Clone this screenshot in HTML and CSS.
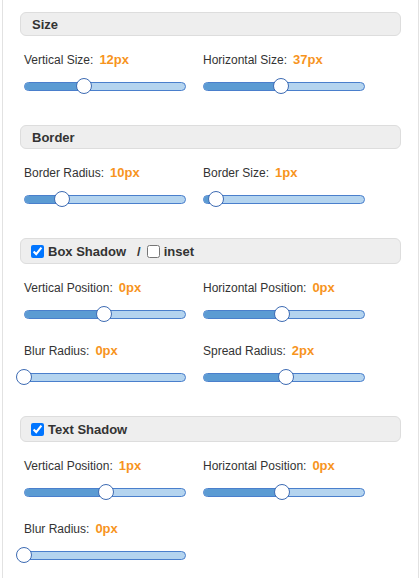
FILE: index.html
```html
<!DOCTYPE html>
<html>
<head>
<meta charset="utf-8">
<link rel="stylesheet" href="styles.css">
</head>
<body>
<div class="panel">
  <section class="section">
    <div class="header"><span class="title">Size</span></div>
    <div class="grid">
      <div class="field">
        <div class="label">Vertical Size:<span class="value">12px</span></div>
        <div class="slider"><div class="track"><div class="fill" style="width:60px"></div></div><div class="thumb" style="left:60px"></div></div>
      </div>
      <div class="field">
        <div class="label">Horizontal Size:<span class="value">37px</span></div>
        <div class="slider"><div class="track"><div class="fill" style="width:78px"></div></div><div class="thumb" style="left:78px"></div></div>
      </div>
    </div>
  </section>

  <section class="section">
    <div class="header"><span class="title">Border</span></div>
    <div class="grid">
      <div class="field">
        <div class="label">Border Radius:<span class="value">10px</span></div>
        <div class="slider"><div class="track"><div class="fill" style="width:38px"></div></div><div class="thumb" style="left:38px"></div></div>
      </div>
      <div class="field">
        <div class="label">Border Size:<span class="value">1px</span></div>
        <div class="slider"><div class="track"><div class="fill" style="width:13px"></div></div><div class="thumb" style="left:13px"></div></div>
      </div>
    </div>
  </section>

  <section class="section">
    <div class="header check-header">
      <input type="checkbox" class="cb" checked><span class="title">Box Shadow</span>
      <span class="slash">/</span>
      <input type="checkbox" class="cb"><span class="title">inset</span>
    </div>
    <div class="grid">
      <div class="field">
        <div class="label">Vertical Position:<span class="value">0px</span></div>
        <div class="slider"><div class="track"><div class="fill" style="width:80px"></div></div><div class="thumb" style="left:80px"></div></div>
      </div>
      <div class="field">
        <div class="label">Horizontal Position:<span class="value">0px</span></div>
        <div class="slider"><div class="track"><div class="fill" style="width:79px"></div></div><div class="thumb" style="left:79px"></div></div>
      </div>
      <div class="field">
        <div class="label">Blur Radius:<span class="value">0px</span></div>
        <div class="slider"><div class="track"><div class="fill" style="width:0px"></div></div><div class="thumb" style="left:0px"></div></div>
      </div>
      <div class="field">
        <div class="label">Spread Radius:<span class="value">2px</span></div>
        <div class="slider"><div class="track"><div class="fill" style="width:83px"></div></div><div class="thumb" style="left:83px"></div></div>
      </div>
    </div>
  </section>

  <section class="section">
    <div class="header check-header">
      <input type="checkbox" class="cb" checked><span class="title">Text Shadow</span>
    </div>
    <div class="grid">
      <div class="field">
        <div class="label">Vertical Position:<span class="value">1px</span></div>
        <div class="slider"><div class="track"><div class="fill" style="width:82px"></div></div><div class="thumb" style="left:82px"></div></div>
      </div>
      <div class="field">
        <div class="label">Horizontal Position:<span class="value">0px</span></div>
        <div class="slider"><div class="track"><div class="fill" style="width:79px"></div></div><div class="thumb" style="left:79px"></div></div>
      </div>
      <div class="field">
        <div class="label">Blur Radius:<span class="value">0px</span></div>
        <div class="slider"><div class="track"><div class="fill" style="width:0px"></div></div><div class="thumb" style="left:0px"></div></div>
      </div>
    </div>
  </section>
</div>
</body>
</html>
```

FILE: styles.css
```css
* { box-sizing: border-box; }
html, body {
  margin: 0;
  padding: 0;
  background: #fff;
  font-family: "Liberation Sans", Arial, sans-serif;
  color: #333;
}
.panel {
  margin: 0 1px 0 2px;
  height: 578px;
  border-left: 1px solid #e2e2e2;
  border-right: 1px solid #e2e2e2;
  padding: 12px 17px 0 17px;
  overflow: hidden;
}
.section {
  margin-bottom: 31px;
}
.header {
  height: 24px;
  background: #eeeeee;
  border: 1px solid #dddddd;
  border-radius: 6px;
  padding-left: 11px;
  display: flex;
  align-items: center;
}
.check-header {
  height: 26px;
  padding-left: 6px;
}
.title {
  font-weight: bold;
  font-size: 13px;
  color: #333;
}
.cb {
  width: 13px;
  height: 13px;
  margin: 0 4px 0 4px;
}
.slash {
  font-weight: bold;
  font-size: 13px;
  margin: 0 2px 0 11px;
}
.grid {
  display: grid;
  grid-template-columns: 179px 179px;
  row-gap: 21px;
  padding: 0 4px;
  margin-top: 16px;
}
.label {
  font-size: 12px;
  line-height: 16px;
  height: 16px;
  white-space: nowrap;
  color: #333;
}
.value {
  color: #f7941d;
  font-weight: bold;
  font-size: 13px;
  margin-left: 6px;
}
.slider {
  position: relative;
  width: 162px;
  height: 16px;
  margin-top: 10px;
  display: flex;
  align-items: center;
}
.track {
  width: 162px;
  height: 9px;
  border: 1px solid #4a7fcc;
  border-radius: 5px;
  background: #b4d4ef;
  overflow: hidden;
}
.fill {
  height: 100%;
  background: #5b9bd3;
}
.thumb {
  position: absolute;
  top: 0;
  width: 16px;
  height: 16px;
  margin-left: -8px;
  border-radius: 50%;
  background: #fff;
  border: 1.5px solid #3d6bb3;
}
```
